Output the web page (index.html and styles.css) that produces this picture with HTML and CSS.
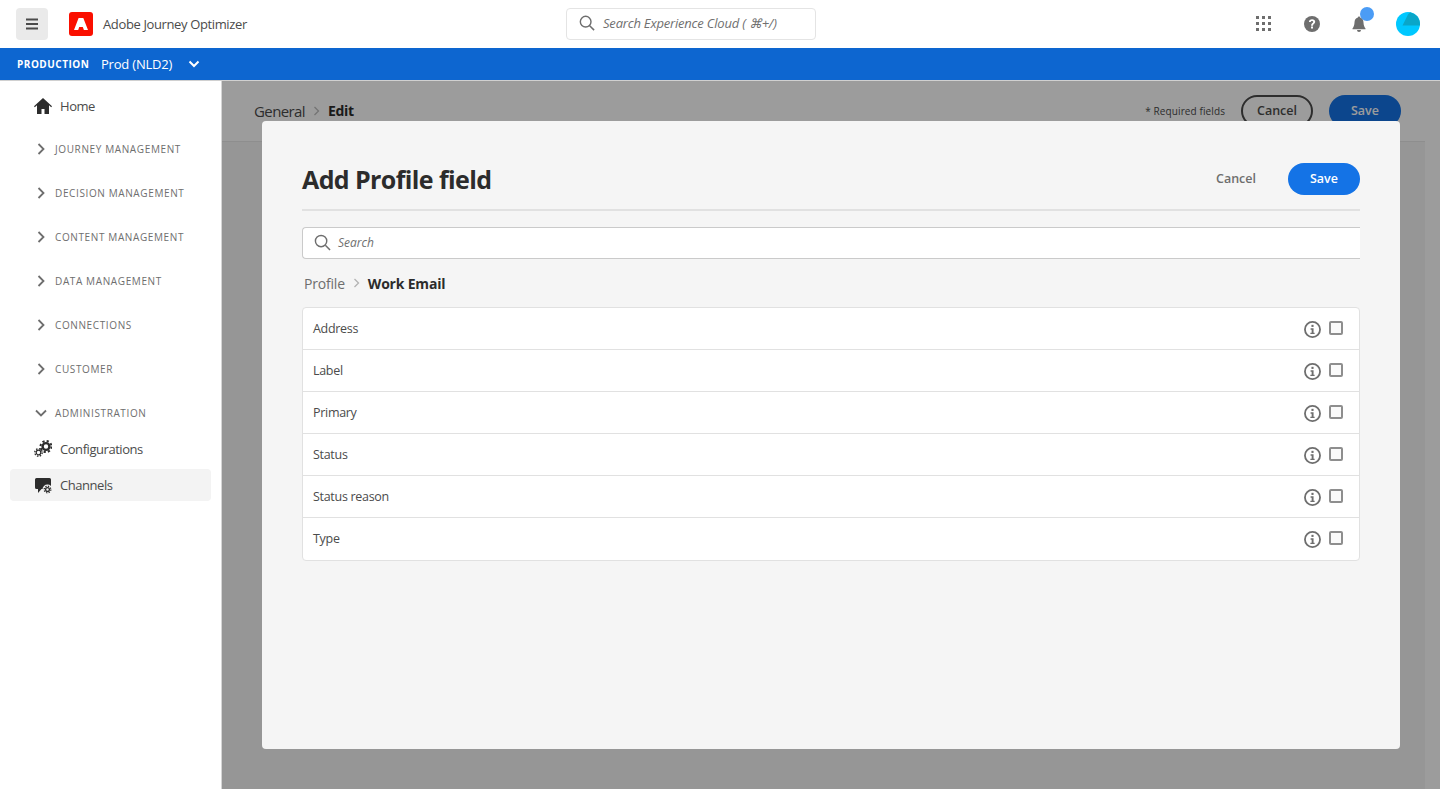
FILE: index.html
```html
<!DOCTYPE html>
<html lang="en">

<head>
    <title>Adobe Journey Optimizer</title>
    <link rel="stylesheet" href="styles.css">
</head>

<body>
    <header class="topbar">
        <div class="brand">
            <button class="menu-btn">
                <svg width="14" height="12" viewBox="0 0 14 12"><path d="M1 1.500h12M1 6h12M1 10.500h12" stroke="#4b4b4b" stroke-width="2"/></svg>
            </button>
            <svg class="logo" width="24" height="24" viewBox="0 0 24 24"><rect width="24" height="24" rx="3" fill="#fa0f00"/><path d="M9.600 6h4.700L19 18h-4.100l-1.100-3h-3.600l-1 3H5z" fill="#fff"/></svg>
            <span class="brand-name">Adobe Journey Optimizer</span>
        </div>
        <div class="global-search">
            <svg width="16" height="16" viewBox="0 0 18 18"><circle cx="7.500" cy="7.500" r="6" fill="none" stroke="#6e6e6e" stroke-width="1.600"/><path d="M12 12l5 5" stroke="#6e6e6e" stroke-width="1.700"/></svg>
            <span>Search Experience Cloud ( &#8984;+/)</span>
        </div>
        <div class="top-actions">
            <svg class="apps" width="16" height="16" viewBox="0 0 16 16" fill="#6e6e6e">
                <rect x="0" y="0" width="3" height="3"/><rect x="6" y="0" width="3" height="3"/><rect x="12" y="0" width="3" height="3"/>
                <rect x="0" y="6" width="3" height="3"/><rect x="6" y="6" width="3" height="3"/><rect x="12" y="6" width="3" height="3"/>
                <rect x="0" y="12" width="3" height="3"/><rect x="6" y="12" width="3" height="3"/><rect x="12" y="12" width="3" height="3"/>
            </svg>
            <svg class="help" width="16" height="16" viewBox="0 0 16 16"><circle cx="8" cy="8" r="8" fill="#6e6e6e"/><path d="M4.900 6C5 4.200 6.300 3.200 8.100 3.200c1.800 0 3.100 1 3.100 2.600 0 2.100-2.200 2.200-2.200 3.900H7.100c0-2.600 2.100-2.700 2.100-3.800 0-.6-.5-1-1.200-1-.8 0-1.200.5-1.300 1.100z" fill="#fff"/><rect x="7" y="10.500" width="2" height="2" fill="#fff"/></svg>
            <span class="bell-wrap">
                <svg width="16" height="18" viewBox="0 0 16 18"><path d="M8 1.500c-.7 0-1.100.5-1.100 1.100C4.500 3.200 3.600 5 3.500 7.500c-.1 2.500-.7 4.300-2 6v.8h13v-.8c-1.300-1.700-1.900-3.500-2-6-.1-2.500-1-4.300-3.400-4.900 0-.6-.4-1.100-1.100-1.100zM6 15h4a2 2 0 0 1-4 0z" fill="#6e6e6e"/></svg>
                <span class="bell-dot"></span>
            </span>
            <svg class="avatar" width="24" height="24" viewBox="0 0 24 24"><circle cx="12" cy="12" r="12" fill="#00c8ff"/><path d="M12 2.500 L14 .2 A12 12 0 0 1 24 12 L24 13.500 H6.500z" fill="#0aa6c8"/></svg>
        </div>
    </header>

    <div class="envbar">
        <span class="env-label">PRODUCTION</span>
        <span class="env-name">Prod (NLD2)</span>
        <svg width="12" height="8" viewBox="0 0 12 8"><path d="M1.500 1.500L6 6l4.500-4.500" fill="none" stroke="#fff" stroke-width="2"/></svg>
    </div>

    <div class="app">
        <nav class="sidebar">
            <a class="nav-item nav-home">
                <svg width="18" height="16" viewBox="0 0 18 16"><path d="M9 0L0 8.300l.8.900L3 7.300V16h4.500v-5h3v5H15V7.300l2.200 1.900.8-.9z" fill="#2c2c2c"/></svg>
                <span>Home</span>
            </a>
            <div class="nav-group">
                <svg width="8" height="12" viewBox="0 0 8 12"><path d="M1.500 1l5 5-5 5" fill="none" stroke="#6e6e6e" stroke-width="1.800"/></svg>
                <span>JOURNEY MANAGEMENT</span>
            </div>
            <div class="nav-group">
                <svg width="8" height="12" viewBox="0 0 8 12"><path d="M1.500 1l5 5-5 5" fill="none" stroke="#6e6e6e" stroke-width="1.800"/></svg>
                <span>DECISION MANAGEMENT</span>
            </div>
            <div class="nav-group">
                <svg width="8" height="12" viewBox="0 0 8 12"><path d="M1.500 1l5 5-5 5" fill="none" stroke="#6e6e6e" stroke-width="1.800"/></svg>
                <span>CONTENT MANAGEMENT</span>
            </div>
            <div class="nav-group">
                <svg width="8" height="12" viewBox="0 0 8 12"><path d="M1.500 1l5 5-5 5" fill="none" stroke="#6e6e6e" stroke-width="1.800"/></svg>
                <span>DATA MANAGEMENT</span>
            </div>
            <div class="nav-group">
                <svg width="8" height="12" viewBox="0 0 8 12"><path d="M1.500 1l5 5-5 5" fill="none" stroke="#6e6e6e" stroke-width="1.800"/></svg>
                <span>CONNECTIONS</span>
            </div>
            <div class="nav-group">
                <svg width="8" height="12" viewBox="0 0 8 12"><path d="M1.500 1l5 5-5 5" fill="none" stroke="#6e6e6e" stroke-width="1.800"/></svg>
                <span>CUSTOMER</span>
            </div>
            <div class="nav-group nav-group-open">
                <svg class="chev-down" width="12" height="8" viewBox="0 0 12 8"><path d="M1 1.500l5 5 5-5" fill="none" stroke="#6e6e6e" stroke-width="1.800"/></svg>
                <span>ADMINISTRATION</span>
            </div>
            <a class="nav-item">
                <svg width="18" height="18" viewBox="0 0 18 18">
                    <circle cx="12" cy="6.500" r="3.400" fill="none" stroke="#2c2c2c" stroke-width="2.400"/>
                    <circle cx="12" cy="6.500" r="5.500" fill="none" stroke="#2c2c2c" stroke-width="2" stroke-dasharray="2.200 2.120"/>
                    <circle cx="4.500" cy="12.500" r="2.300" fill="none" stroke="#2c2c2c" stroke-width="1.200"/>
                    <circle cx="4.500" cy="12.500" r="3.700" fill="none" stroke="#2c2c2c" stroke-width="1.400" stroke-dasharray="1.450 1.450"/>
                </svg>
                <span>Configurations</span>
            </a>
            <a class="nav-item active">
                <svg width="18" height="18" viewBox="0 0 18 18">
                    <path d="M2.500 2h13A1.500 1.500 0 0 1 17 3.500V13H7.500L4 17v-4H2.500A1.500 1.500 0 0 1 1 11.500v-8A1.500 1.500 0 0 1 2.500 2z" fill="#2c2c2c"/>
                    <circle cx="13.500" cy="13.500" r="5" fill="#f3f3f3"/>
                    <circle cx="13.500" cy="13.500" r="1.900" fill="none" stroke="#2c2c2c" stroke-width="1.300"/>
                    <circle cx="13.500" cy="13.500" r="3.300" fill="none" stroke="#2c2c2c" stroke-width="1.300" stroke-dasharray="1.300 1.290"/>
                </svg>
                <span>Channels</span>
            </a>
        </nav>

        <main class="content">
            <div class="page-head">
                <div class="crumbs">
                    <span class="crumb-link">General</span>
                    <svg width="7" height="10" viewBox="0 0 7 10"><path d="M1.500 1l4 4-4 4" fill="none" stroke="#bdbdbd" stroke-width="1.300"/></svg>
                    <b>Edit</b>
                </div>
                <span class="required">* Required fields</span>
                <button class="btn btn-outline">Cancel</button>
                <button class="btn btn-blue">Save</button>
            </div>
            <div class="page-body"></div>

            <div class="overlay">
                <section class="modal">
                    <div class="modal-head">
                        <h1>Add Profile field</h1>
                        <button class="btn btn-quiet">Cancel</button>
                        <button class="btn btn-primary">Save</button>
                    </div>
                    <div class="field-search">
                        <svg width="17" height="17" viewBox="0 0 18 18"><circle cx="7.500" cy="7.500" r="6" fill="none" stroke="#6e6e6e" stroke-width="1.500"/><path d="M12 12l5 5" stroke="#6e6e6e" stroke-width="1.600"/></svg>
                        <span>Search</span>
                    </div>
                    <div class="path">
                        <span class="path-root">Profile</span>
                        <svg width="7" height="10" viewBox="0 0 7 10"><path d="M1.500 1l4 4-4 4" fill="none" stroke="#b3b3b3" stroke-width="1.300"/></svg>
                        <b>Work Email</b>
                    </div>
                    <ul class="fields">
                        <li><span>Address</span><svg class="info" width="17" height="17" viewBox="0 0 16 16"><use href="#info"/></svg><i class="check"></i></li>
                        <li><span>Label</span><svg class="info" width="17" height="17" viewBox="0 0 16 16"><use href="#info"/></svg><i class="check"></i></li>
                        <li><span>Primary</span><svg class="info" width="17" height="17" viewBox="0 0 16 16"><use href="#info"/></svg><i class="check"></i></li>
                        <li><span>Status</span><svg class="info" width="17" height="17" viewBox="0 0 16 16"><use href="#info"/></svg><i class="check"></i></li>
                        <li><span>Status reason</span><svg class="info" width="17" height="17" viewBox="0 0 16 16"><use href="#info"/></svg><i class="check"></i></li>
                        <li><span>Type</span><svg class="info" width="17" height="17" viewBox="0 0 16 16"><use href="#info"/></svg><i class="check"></i></li>
                    </ul>
                </section>
            </div>
        </main>
    </div>

    <svg class="defs" width="0" height="0">
        <symbol id="info" viewBox="0 0 16 16">
            <circle cx="8" cy="8" r="7.100" fill="none" stroke="#6e6e6e" stroke-width="1.700"/>
            <rect x="7" y="3.600" width="2" height="2" fill="#6e6e6e"/>
            <path d="M6.200 6.900h2.800v4.100h1v1.300H6v-1.300h1.200V8.200h-1z" fill="#6e6e6e"/>
        </symbol>
    </svg>
</body>

</html>
```

FILE: styles.css
```css
* {
    box-sizing: border-box;
}

html, body {
    height: 100%;
}

body {
    margin: 0;
    overflow: hidden;
    display: flex;
    flex-direction: column;
    background-color: white;
    color: #4b4b4b;
    font-family: "Open Sans", "Noto Sans", sans-serif;
    font-size: 13px;
}

button {
    font-family: inherit;
}

.defs {
    position: absolute;
}

/* top bar */
.topbar {
    height: 48px;
    flex: none;
    display: flex;
    align-items: center;
    padding-left: 16px;
    padding-right: 20px;
}

.brand {
    display: flex;
    align-items: center;
    width: 550px;
}

.menu-btn {
    width: 32px;
    height: 32px;
    border: 0;
    border-radius: 4px;
    background-color: #eaeaea;
    display: flex;
    align-items: center;
    justify-content: center;
    padding: 0;
}

.logo {
    margin-left: 21px;
}

.brand-name {
    margin-left: 10px;
    font-size: 13px;
    letter-spacing: -0.37px;
    color: #4b4b4b;
}

.global-search {
    width: 250px;
    height: 32px;
    border: 1px solid #e4e4e4;
    border-radius: 4px;
    display: flex;
    align-items: center;
    gap: 8px;
    padding-left: 12px;
    padding-bottom: 2px;
    font-style: italic;
    font-size: 13px;
    letter-spacing: -0.2px;
    color: #707070;
}

.top-actions {
    margin-left: auto;
    display: flex;
    align-items: center;
}

.apps {
    margin-right: 32px;
}

.help {
    margin-right: 31px;
}

.bell-wrap {
    position: relative;
    width: 16px;
    height: 18px;
    margin-right: 29px;
}

.bell-dot {
    position: absolute;
    left: 9px;
    top: -8px;
    width: 14px;
    height: 14px;
    border-radius: 50%;
    background-color: #4b9cf5;
}

/* environment bar */
.envbar {
    height: 33px;
    flex: none;
    display: flex;
    align-items: center;
    background-color: #0d66d0;
    border-bottom: 1px solid #d0d0d0;
    padding-left: 17px;
    color: white;
}

.env-label {
    font-size: 10px;
    font-weight: 700;
    letter-spacing: 0.5px;
    width: 84px;
}

.env-name {
    font-size: 13px;
    width: 87px;
    letter-spacing: -0.2px;
}

/* sidebar */
.app {
    flex: 1;
    display: flex;
    min-height: 0;
}

.sidebar {
    width: 222px;
    flex: none;
    padding: 9px 10px 0 10px;
    border-right: 1px solid #d5d5d5;
    background-color: white;
}

.nav-item {
    height: 32px;
    width: 201px;
    margin-bottom: 4px;
    display: flex;
    align-items: center;
    gap: 8px;
    padding-left: 24px;
    border-radius: 4px;
    font-size: 13px;
    letter-spacing: -0.45px;
    color: #4b4b4b;
}

.nav-home {
    margin-bottom: 13px;
}

.active {
    background-color: #f3f3f3;
}

.nav-group {
    height: 28px;
    margin-bottom: 16px;
    display: flex;
    align-items: center;
    padding-left: 27px;
    gap: 10px;
    font-size: 10px;
    letter-spacing: 0.62px;
    color: #6e6e6e;
}

.nav-group-open {
    margin-bottom: 6px;
    padding-left: 25px;
    gap: 8px;
}

/* page behind the dialog */
.content {
    flex: 1;
    min-width: 0;
    position: relative;
    display: flex;
    flex-direction: column;
    background-color: #fff;
}

.page-head {
    height: 60px;
    display: flex;
    align-items: center;
    padding-left: 32px;
    padding-right: 39px;
}

.crumbs {
    display: flex;
    align-items: center;
    gap: 8px;
    font-size: 15px;
    flex: 1;
    color: #2c2c2c;
    padding-bottom: 1px;
}

.crumbs b {
    font-size: 14px;
    letter-spacing: -0.3px;
}

.crumb-link {
    color: #4b4b4b;
    letter-spacing: -0.6px;
}

.required {
    font-size: 10px;
    letter-spacing: 0.1px;
    color: #4b4b4b;
    margin-right: 16px;
    margin-bottom: 1px;
}

.page-body {
    flex: 1;
    margin-right: 15px;
    background-color: #f5f5f5;
    border-top: 1px solid #e8e8e8;
}

.btn {
    height: 32px;
    width: 72px;
    border-radius: 16px;
    border: 0;
    font-size: 12.5px;
    font-weight: 600;
    padding: 0 0 2px 0;
}

.btn-outline {
    border: 2px solid #4b4b4b;
    background: transparent;
    color: #4b4b4b;
    margin-right: 16px;
}

.btn-blue {
    background-color: #1473e6;
    color: white;
}

/* dialog */
.overlay {
    position: absolute;
    inset: 0;
    padding: 40px;
    display: flex;
    background-color: rgba(0, 0, 0, 0.39);
}

.modal {
    flex: 1;
    min-width: 0;
    background-color: #f5f5f5;
    border-radius: 4px;
    padding: 42px 40px 0 40px;
}

.modal-head {
    display: flex;
    align-items: center;
    height: 48px;
    padding-bottom: 14px;
    border-bottom: 2px solid #e1e1e1;
}

.modal-head h1 {
    margin: 0;
    flex: 1;
    font-size: 25px;
    font-weight: 700;
    letter-spacing: -0.6px;
    color: #2c2c2c;
}

.btn-quiet {
    background: transparent;
    color: #6e6e6e;
    margin-right: 16px;
}

.btn-primary {
    background-color: #1473e6;
    color: white;
}

.field-search {
    margin-top: 16px;
    height: 32px;
    display: flex;
    align-items: center;
    gap: 7px;
    padding-left: 11px;
    padding-bottom: 1px;
    background-color: white;
    border: 1px solid #cacaca;
    border-right: 0;
    border-radius: 4px 0 0 4px;
    font-size: 12px;
    font-style: italic;
    color: #707070;
}

.path {
    margin-top: 13px;
    margin-bottom: 13px;
    height: 22px;
    padding-left: 2px;
    display: flex;
    align-items: center;
    gap: 8px;
    font-size: 14px;
    color: #2c2c2c;
}

.path b {
    letter-spacing: -0.2px;
}

.path-root {
    color: #6e6e6e;
    letter-spacing: -0.2px;
}

.fields {
    list-style: none;
    margin: 0;
    padding: 0;
    background-color: white;
    border: 1px solid #e1e1e1;
    border-radius: 4px;
}

.fields li {
    height: 42px;
    display: flex;
    align-items: center;
    padding-left: 10px;
    padding-right: 16px;
    border-bottom: 1px solid #e1e1e1;
    font-size: 12.5px;
    letter-spacing: -0.3px;
    color: #4b4b4b;
}

.fields li:last-child {
    border-bottom-color: transparent;
}

.fields li span {
    flex: 1;
}

.info {
    margin-top: 1px;
}

.check {
    width: 14px;
    height: 14px;
    margin-left: 8px;
    margin-bottom: 1px;
    border: 2px solid #8e8e8e;
    border-radius: 2px;
    background-color: #fafafa;
}
```
